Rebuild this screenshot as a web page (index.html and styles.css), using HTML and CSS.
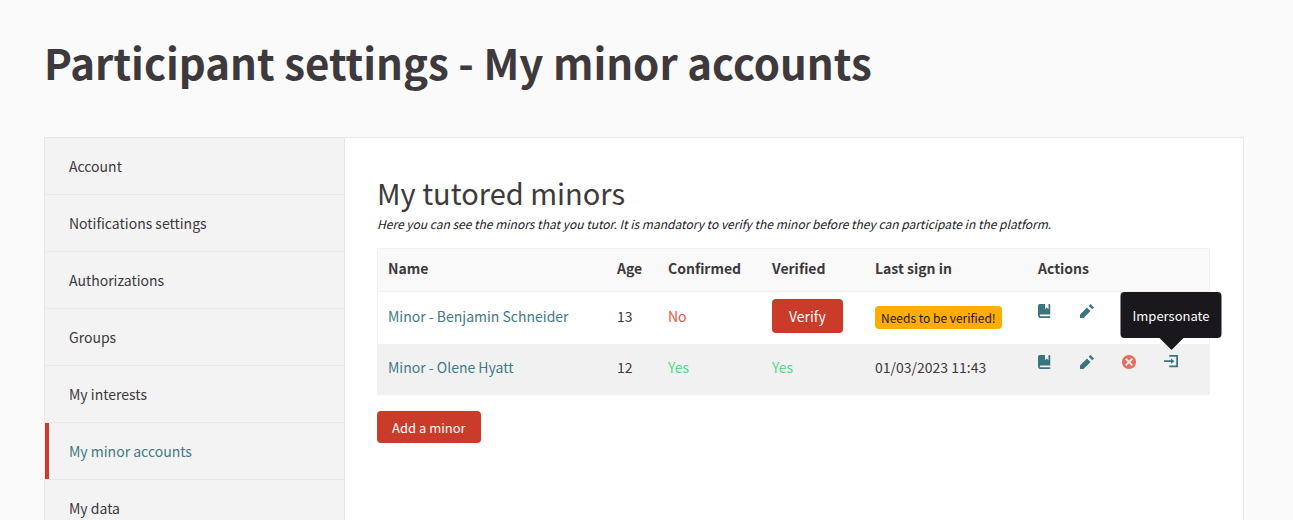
FILE: index.html
```html
<!DOCTYPE html>
<html lang="en">
<head>
<meta charset="utf-8">
<meta name="viewport" content="width=device-width, initial-scale=1">
<title>Participant settings - My minor accounts</title>
<link rel="stylesheet" href="styles.css">
</head>
<body>
<svg class="sprite" aria-hidden="true">
  <symbol id="book" viewBox="0 0 8 8"><path d="M1 0c-.07 0-.13.01-.19.03-.39.08-.7.39-.78.78-.03.06-.03.12-.03.19v5.5c0 .83.67 1.5 1.5 1.5h5.5v-1h-5.5c-.28 0-.5-.22-.5-.5s.22-.5.5-.5h5.5v-5.5c0-.28-.22-.5-.5-.5h-.5v3l-1-1-1 1v-3h-3z"/></symbol>
  <symbol id="pencil" viewBox="0 0 8 8"><path d="M6 0l-1 1 2 2 1-1-2-2zm-2 2l-4 4v2h2l4-4-2-2z"/></symbol>
  <symbol id="circle-x" viewBox="0 0 8 8"><path d="M4 0c-2.2 0-4 1.8-4 4s1.8 4 4 4 4-1.8 4-4-1.8-4-4-4zm-1.5 1.78l1.5 1.5 1.5-1.5.72.72-1.5 1.5 1.5 1.5-.72.72-1.5-1.5-1.5 1.5-.72-.72 1.5-1.5-1.5-1.5.72-.72z"/></symbol>
  <symbol id="login" viewBox="0 0 8 8"><path d="M3 0v1h4v5h-4v1h5v-7h-5zm1 2v1h-4v1h4v1l2-1.5-2-1.5z"/></symbol>
</svg>
<main class="wrapper">
  <h1 class="page-title">Participant settings - My minor accounts</h1>
  <div class="panel">
    <nav class="side">
      <a class="side-link" href="#">Account</a>
      <a class="side-link" href="#">Notifications settings</a>
      <a class="side-link" href="#">Authorizations</a>
      <a class="side-link" href="#">Groups</a>
      <a class="side-link" href="#">My interests</a>
      <a class="side-link active" href="#" aria-current="page">My minor accounts</a>
      <a class="side-link" href="#">My data</a>
    </nav>
    <section class="content">
      <h2 class="section-title">My tutored minors</h2>
      <p class="help">Here you can see the minors that you tutor. It is mandatory to verify the minor before they can participate in the platform.</p>
      <table class="minors">
        <colgroup><col><col class="col-age"><col class="col-mid"><col class="col-verified"><col class="col-date"><col class="col-actions"></colgroup>
        <thead>
          <tr><th>Name</th><th>Age</th><th>Confirmed</th><th>Verified</th><th>Last sign in</th><th>Actions</th></tr>
        </thead>
        <tbody>
          <tr>
            <td><a class="link" href="#">Minor - Benjamin Schneider</a></td>
            <td>13</td>
            <td class="no">No</td>
            <td><button class="button" type="button">Verify</button></td>
            <td><span class="label">Needs to be verified!</span></td>
            <td class="actions-cell">
              <div class="actions">
                <a class="action" href="#"><svg class="icon"><use href="#book"/></svg></a>
                <a class="action" href="#"><svg class="icon"><use href="#pencil"/></svg></a>
              </div>
            </td>
          </tr>
          <tr>
            <td><a class="link" href="#">Minor - Olene Hyatt</a></td>
            <td>12</td>
            <td class="yes">Yes</td>
            <td class="yes">Yes</td>
            <td>01/03/2023 11:43</td>
            <td class="actions-cell">
              <div class="actions">
                <a class="action" href="#"><svg class="icon"><use href="#book"/></svg></a>
                <a class="action" href="#"><svg class="icon"><use href="#pencil"/></svg></a>
                <a class="action alert" href="#"><svg class="icon"><use href="#circle-x"/></svg></a>
                <a class="action" href="#" aria-describedby="tip"><svg class="icon"><use href="#login"/></svg><span class="tooltip" id="tip" role="tooltip">Impersonate</span></a>
              </div>
            </td>
          </tr>
        </tbody>
      </table>
      <button class="button small" type="button">Add a minor</button>
    </section>
  </div>
</main>
</body>
</html>
```
FILE: styles.css
```css
* { box-sizing: border-box; }

body {
  margin: 0;
  background: #fafafa;
  color: #3d393c;
  font-family: "Noto Sans CJK SC", "Noto Sans", sans-serif;
  font-size: 14px;
  line-height: 24px;
}

a { color: inherit; text-decoration: none; }

.sprite { display: none; }

.wrapper { padding: 30px 49px 0 44px; }

.page-title {
  margin: 0 0 43px;
  font-size: 42px;
  font-weight: 700;
  line-height: 64px;
}

.panel {
  display: flex;
  background: #fff;
  border: 1px solid #e8e8e8;
}

.side {
  flex: 0 0 300px;
  background: #f3f3f3;
  border-right: 1px solid #e8e8e8;
}

.side-link {
  display: block;
  padding: 16px 24px;
  border-bottom: 1px solid #e8e8e8;
}

.side-link.active {
  box-shadow: inset 4px 0 #cb3b29;
  color: #3f7a87;
}

.content {
  flex: 1;
  min-width: 0;
  padding: 34px 33px 32px 32px;
}

.section-title {
  margin: 0 0 2px;
  font-size: 29px;
  font-weight: 400;
  line-height: 40px;
}

.help {
  margin: 0 0 14px;
  color: #1a181d;
  font-size: 12px;
  font-style: italic;
  line-height: 20px;
}

.minors {
  width: 100%;
  margin-bottom: 16px;
  border: 1px solid #f1f1f1;
  border-spacing: 0;
  table-layout: fixed;
}

.col-age { width: 51px; }
.col-mid { width: 104px; }
.col-verified { width: 103px; }
.col-date { width: 163px; }
.col-actions { width: 181px; }

.minors th,
.minors td { padding: 0 10px 4px; text-align: left; }

.minors th {
  height: 43px;
  background: #f9f9f9;
  border-bottom: 1px solid #f1f1f1;
  font-weight: 700;
}

.minors td { height: 52px; }

.minors tbody tr:nth-child(even) { background: #f1f1f1; }

.minors tbody tr:nth-child(even) td { height: 50px; }

.link { color: #3f7a87; }
.yes { color: #57d685; }
.no { color: #ec5840; }

.button {
  display: block;
  padding: 5px 17px;
  border: 0;
  border-radius: 4px;
  background: #cb3b29;
  color: #fefefe;
  font: inherit;
}

.button.small {
  padding: 5px 15px 3px;
  font-size: 13px;
}

.label {
  display: inline-block;
  padding: 2px 6px;
  border-radius: 4px;
  background: #ffae00;
  color: #1a181d;
  font-size: 12px;
  line-height: 19px;
  vertical-align: middle;
}

.minors .actions-cell { padding-top: 12px; vertical-align: top; }
.minors tr:nth-child(even) .actions-cell { padding-top: 11px; }

.actions { display: flex; gap: 28px; }

.action { position: relative; color: #39747f; }
.action.alert { color: #e96d5f; }

.icon {
  display: block;
  width: 14px;
  height: 14px;
  fill: currentColor;
}

.tooltip {
  position: absolute;
  bottom: 31px;
  left: 50%;
  padding: 13px 12px 11px;
  border-radius: 4px;
  background: #1a181d;
  color: #fefefe;
  font-size: 13px;
  line-height: 22px;
  transform: translateX(-50%);
}

.tooltip::after {
  content: "";
  position: absolute;
  top: 100%;
  left: 50%;
  border: 12px solid transparent;
  border-top-color: #1a181d;
  border-bottom: 0;
  transform: translateX(-50%);
}
```
